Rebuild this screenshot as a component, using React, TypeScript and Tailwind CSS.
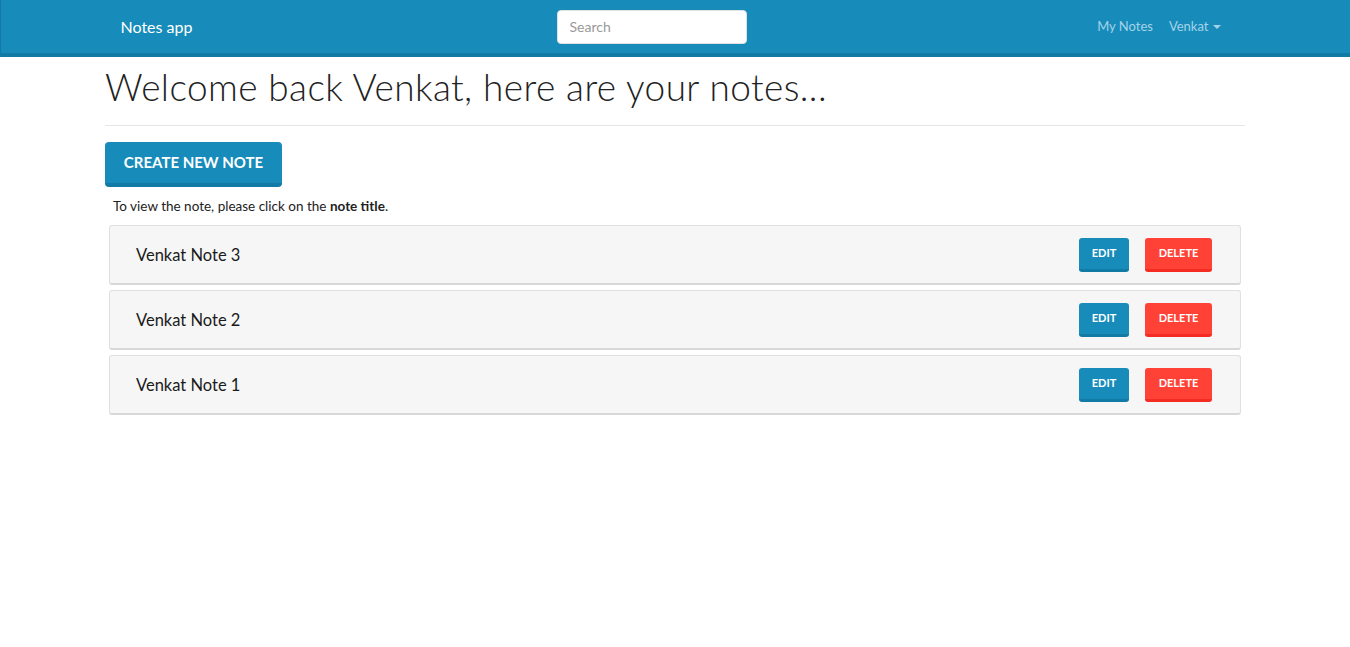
export default function App() {
  const notes = ["Venkat Note 3", "Venkat Note 2", "Venkat Note 1"];

  return (
    <div className="min-h-screen bg-white font-['Lato','Liberation_Sans',sans-serif] text-[#222]">
      {/* Navbar */}
      <nav className="h-[57px] bg-[#178cba] border-b-[4px] border-l border-[#127ba5]">
        <div className="w-[1110px] mx-auto h-[53px] flex items-center">
          <span className="text-white text-[16px] w-[436px]">Notes app</span>
          <input
            className="w-[190px] h-[34px] rounded-[4px] bg-white border border-[#e0e0e0] px-3 text-[14px] text-[#555] placeholder:text-[#999] outline-none"
            placeholder="Search"
          />
          <div className="ml-auto flex items-center gap-[16px] pr-[10px] text-[13px] text-[#a4d3e8]">
            <span>My Notes</span>
            <span className="flex items-center gap-[4px]">
              Venkat
              <span className="w-0 h-0 border-l-[4px] border-r-[4px] border-t-[4px] border-l-transparent border-r-transparent border-t-[#a4d3e8]" />
            </span>
          </div>
        </div>
      </nav>

      {/* Main */}
      <main className="w-[1140px] mx-auto">
        <h1 className="pt-[7px] text-[37px] font-light leading-[46px] font-['Lato','Open_Sans',sans-serif] tracking-[0.4px]">
          Welcome back Venkat, here are your notes...
        </h1>
        <hr className="mt-[15px] border-t border-[#e6e6e6]" />

        <button className="mt-[16px] h-[45px] w-[177px] rounded-[4px] bg-[#178cba] border-b-[4px] border-[#127ba5] text-white font-bold text-[15px] uppercase">
          Create New Note
        </button>

        <p className="mt-[9px] ml-[8px] text-[13.5px] leading-[20px]">
          To view the note, please click on the <strong>note title</strong>.
        </p>

        <div className="mt-[9px] ml-[4px] w-[1132px] flex flex-col gap-[5px]">
          {notes.map((n) => (
            <div
              key={n}
              className="h-[60px] bg-[#f6f6f6] border border-[#e0e0e0] border-b-[2px] border-b-[#d8d8d8] rounded-[3px] flex items-center pl-[26px] pr-[28px]"
            >
              <span className="text-[16.5px] text-[#1a1a1a] pt-[2px]">{n}</span>
              <div className="ml-auto flex items-center gap-[16px] pt-[1px]">
                <button className="h-[34px] w-[50px] rounded-[3px] bg-[#178cba] border-b-[3px] border-[#127ba5] text-white text-[11px] font-bold uppercase">
                  Edit
                </button>
                <button className="h-[34px] w-[67px] rounded-[3px] bg-[#ff4136] border-b-[3px] border-[#f52c22] text-white text-[11px] font-bold uppercase">
                  Delete
                </button>
              </div>
            </div>
          ))}
        </div>
      </main>
    </div>
  );
}
